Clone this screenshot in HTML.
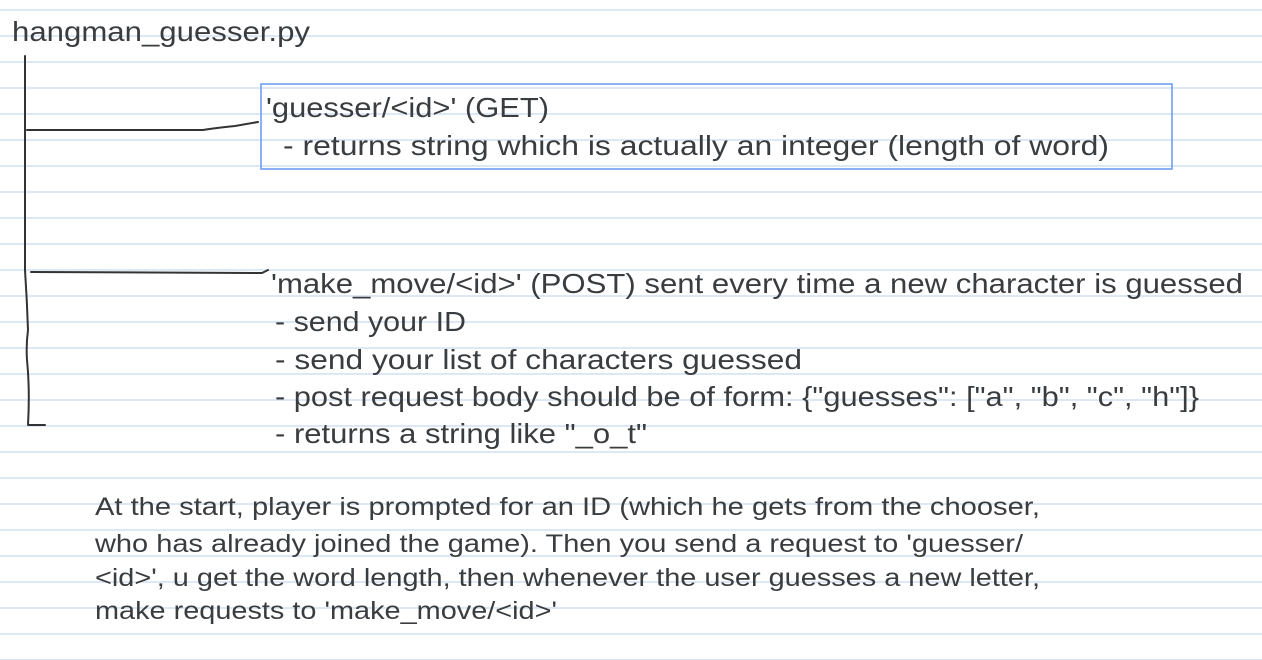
<!DOCTYPE html>
<html><head><meta charset="utf-8"><style>
html,body{margin:0;padding:0;background:#fff;width:1262px;height:660px;overflow:hidden}
svg{display:block}
text{font-family:"Liberation Sans",sans-serif;fill:#3a3d40}
</style></head><body>
<svg width="1262" height="660" viewBox="0 0 1262 660" xmlns="http://www.w3.org/2000/svg">
<g stroke="#dde8f7" stroke-width="2">
<line x1="0" x2="1262" y1="10" y2="10"/><line x1="0" x2="1262" y1="36" y2="36"/><line x1="0" x2="1262" y1="62" y2="62"/><line x1="0" x2="1262" y1="88" y2="88"/><line x1="0" x2="1262" y1="114" y2="114"/><line x1="0" x2="1262" y1="140" y2="140"/><line x1="0" x2="1262" y1="166" y2="166"/><line x1="0" x2="1262" y1="192" y2="192"/><line x1="0" x2="1262" y1="218" y2="218"/><line x1="0" x2="1262" y1="244" y2="244"/><line x1="0" x2="1262" y1="270" y2="270"/><line x1="0" x2="1262" y1="296" y2="296"/><line x1="0" x2="1262" y1="322" y2="322"/><line x1="0" x2="1262" y1="348" y2="348"/><line x1="0" x2="1262" y1="374" y2="374"/><line x1="0" x2="1262" y1="400" y2="400"/><line x1="0" x2="1262" y1="426" y2="426"/><line x1="0" x2="1262" y1="452" y2="452"/><line x1="0" x2="1262" y1="478" y2="478"/><line x1="0" x2="1262" y1="504" y2="504"/><line x1="0" x2="1262" y1="530" y2="530"/><line x1="0" x2="1262" y1="556" y2="556"/><line x1="0" x2="1262" y1="582" y2="582"/><line x1="0" x2="1262" y1="608" y2="608"/><line x1="0" x2="1262" y1="634" y2="634"/><line x1="0" x2="1262" y1="660" y2="660"/>
</g>
<rect x="261" y="84" width="911" height="85" fill="none" stroke="#6e9ff0" stroke-width="1.6"/>
<g fill="none" stroke="#333" stroke-width="2" stroke-linecap="round" stroke-linejoin="round">
<path d="M25 56 L25 270 Q27 300 28 330 Q26 345 27 360 Q30 390 28 425 L45 425"/>
<path d="M27 130 L203 130 Q215 128 235 126 L258 122"/>
<path d="M31 272 L262 273 L268 270"/>
</g>
<text x="12" y="41" font-size="28" textLength="298" lengthAdjust="spacingAndGlyphs">hangman_guesser.py</text>
<text x="266" y="117" font-size="28" textLength="283" lengthAdjust="spacingAndGlyphs">'guesser/&lt;id&gt;' (GET)</text>
<text x="283" y="155" font-size="28" textLength="826" lengthAdjust="spacingAndGlyphs">- returns string which is actually an integer (length of word)</text>
<text x="271" y="293" font-size="28" textLength="972" lengthAdjust="spacingAndGlyphs">'make_move/&lt;id&gt;' (POST) sent every time a new character is guessed</text>
<text x="275" y="331" font-size="28" textLength="191" lengthAdjust="spacingAndGlyphs">- send your ID</text>
<text x="275" y="369" font-size="28" textLength="527" lengthAdjust="spacingAndGlyphs">- send your list of characters guessed</text>
<text x="275" y="406" font-size="28" textLength="924" lengthAdjust="spacingAndGlyphs">- post request body should be of form: {"guesses": ["a", "b", "c", "h"]}</text>
<text x="275" y="443" font-size="28" textLength="372" lengthAdjust="spacingAndGlyphs">- returns a string like "_o_t"</text>
<text x="95" y="515" font-size="25" textLength="945" lengthAdjust="spacingAndGlyphs">At the start, player is prompted for an ID (which he gets from the chooser,</text>
<text x="95" y="552" font-size="25" textLength="928" lengthAdjust="spacingAndGlyphs">who has already joined the game). Then you send a request to 'guesser/</text>
<text x="95" y="586" font-size="25" textLength="945" lengthAdjust="spacingAndGlyphs">&lt;id&gt;', u get the word length, then whenever the user guesses a new letter,</text>
<text x="95" y="619" font-size="25" textLength="462" lengthAdjust="spacingAndGlyphs">make requests to 'make_move/&lt;id&gt;'</text>
</svg>
</body></html>
